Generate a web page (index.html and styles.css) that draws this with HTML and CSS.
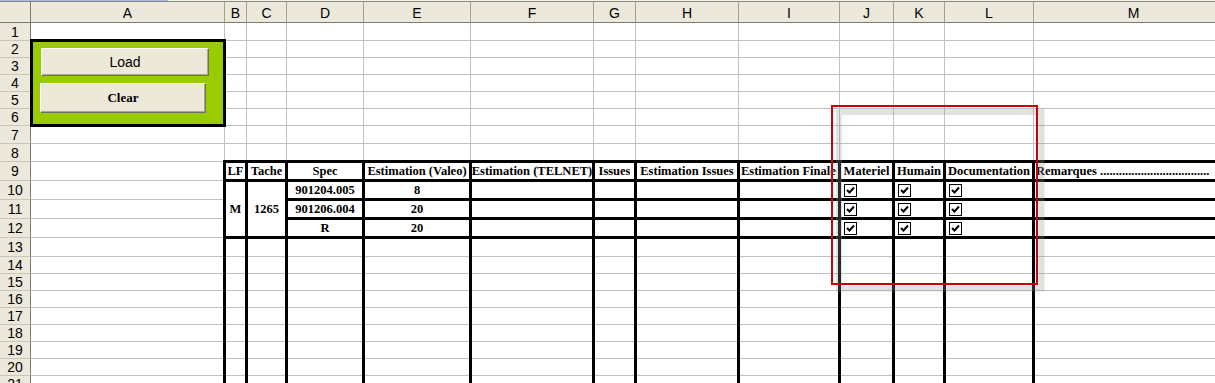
FILE: index.html
```html
<!DOCTYPE html>
<html lang="fr">
<head>
    <meta charset="UTF-8">
    <title>Estimation - Feuil1</title>
    <meta name="viewport" content="width=device-width">
    <link rel="stylesheet" href="styles.css">
    <script src="script.js" defer></script>
</head>
<body>
    <div class="topbar"><span class="topbar-sel"></span></div>
    <div class="sheet" id="sheet"></div>
    <!-- forme dessinée par-dessus la feuille -->
    <svg class="note" width="225" height="198" viewBox="0 0 225 198">
        <rect x="13" y="12" width="202.5" height="176.5" fill="none" stroke="rgba(150,150,150,.28)" stroke-width="6"/>
        <rect x="6" y="6" width="205" height="178" fill="none" stroke="#cc0000" stroke-width="2"/>
    </svg>
</body>
</html>
```

FILE: styles.css
```css
* {
    box-sizing: border-box;
}
body {
    margin: 0;
    overflow: hidden;
    background: #fff;
    color: #000;
    font-family: "Liberation Sans", Arial, sans-serif;
}
.topbar {
    height: 1px;
    background: #f1f0ea;
}
.topbar-sel {
    display: block;
    width: 168px;
    height: 1px;
    background: #a6b9e4;
}
.sheet {
    display: grid;
    grid-template-columns: 31px 194px 22px 40px 77px 107px 123px 42px 103px 101px 54px 51px 89px 200px;
    grid-template-rows: 21px 18px repeat(5, 17px) 18px 18px repeat(5, 19px) repeat(9, 17px);
    border-top: 1px solid #8f8d80;
}
.sheet > div {
    display: flex;
    align-items: center;
    justify-content: center;
    min-width: 0;
    white-space: nowrap;
    border-right: 1px solid #c0c0c0;
    border-bottom: 1px solid #c0c0c0;
}
.sheet span {
    overflow: hidden;
}
.corner, .ch, .rh {
    background: #ece9dc;
    font-size: 14px;
}
.corner {
    border-right-color: #7d7b6d !important;
    border-bottom-color: #7d7b6d !important;
}
.ch {
    padding-top: 1px;
    border-right-color: #a3a08f !important;
    border-bottom-color: #7d7b6d !important;
}
.rh {
    border-right-color: #7d7b6d !important;
    border-bottom-color: #c9c6b7 !important;
}
.cell {
    position: relative;
    font: 700 12.5px "Liberation Serif", "Times New Roman", serif;
}
.cell.left {
    justify-content: flex-start;
    padding-left: 2px;
}
.span3 {
    grid-row: span 3;
}
.span5 {
    grid-row: span 5;
}
.box::after, .side::after, .panel::after {
    content: '';
    position: absolute;
    z-index: 1;
    top: -2px;
    bottom: -2px;
    left: -2px;
    right: -2px;
    border: 3px solid #000;
    pointer-events: none;
}
.side::after {
    top: 0;
    bottom: -1px;
    border-top: 0;
    border-bottom: 0;
}
.panel {
    flex-direction: column;
    align-items: flex-start !important;
    justify-content: flex-start !important;
    padding: 7px 0 0 9px;
    background: #99cc00;
}
.panel::after {
    left: -1px;
}
.btn {
    padding: 0;
    background: #ece9d8;
    color: #000;
    border: 1px solid;
    border-color: #fff #716f64 #716f64 #fff;
    box-shadow: inset -1px -1px #aca899;
}
.btn-load {
    margin-left: 1px;
    width: 168px;
    height: 28px;
    font: 14px "Liberation Sans", Arial, sans-serif;
}
.btn-clear {
    margin-top: 7px;
    width: 166px;
    height: 30px;
    font: 700 13px "Liberation Serif", "Times New Roman", serif;
}
.check {
    justify-content: flex-start !important;
    padding-left: 4px;
}
.check svg {
    display: block;
}
.note {
    position: absolute;
    left: 826px;
    top: 100px;
    z-index: 2;
    pointer-events: none;
}
```

FILE: script.js
```js
const COLS = "ABCDEFGHIJKLM".split("");
const ROWS = 22;

const DATA = {
    B9: "LF", C9: "Tache", D9: "Spec", E9: "Estimation (Valeo)",
    F9: "Estimation (TELNET)", G9: "Issues", H9: "Estimation Issues",
    I9: "Estimation Finale", J9: "Materiel", K9: "Humain", L9: "Documentation",
    M9: "Remarques ...................................",
    B10: "M", C10: "1265",
    D10: "901204.005", E10: "8",
    D11: "901206.004", E11: "20",
    D12: "R", E12: "20"
};

// cellules fusionnées : nombre de lignes
const MERGED = { A2: 5, B10: 3, C10: 3 };
const HIDDEN = ["A3", "A4", "A5", "A6", "B11", "B12", "C11", "C12"];
const CHECKS = ["J10", "K10", "L10", "J11", "K11", "L11", "J12", "K12", "L12"];

const CHECKBOX = '<svg width="13" height="13" viewBox="0 0 13 13">' +
    '<rect x="0.5" y="0.5" width="12" height="12" fill="#fff" stroke="#000"/>' +
    '<path d="M3 6l2.5 2.5 4.5-5" fill="none" stroke="#000" stroke-width="2"/></svg>';

const PANEL = '<button class="btn btn-load" type="button">Load</button>' +
    '<button class="btn btn-clear" type="button">Clear</button>';

function makeCell(cls, text) {
    const div = document.createElement("div");
    div.className = cls;
    if (text) {
        const span = document.createElement("span");
        span.textContent = text;
        div.appendChild(span);
    }
    return div;
}

const sheet = document.getElementById("sheet");
sheet.appendChild(makeCell("corner"));
COLS.forEach(c => sheet.appendChild(makeCell("ch", c)));

for (let r = 1; r <= ROWS; r++) {
    sheet.appendChild(makeCell("rh", String(r)));
    COLS.forEach((c, i) => {
        const ref = c + r;
        if (HIDDEN.includes(ref)) return;
        let cls = "cell";
        if (MERGED[ref]) cls += " span" + MERGED[ref];
        if (i > 0 && r >= 9 && r <= 12) cls += " box";
        if (i > 0 && r >= 13) cls += " side";
        if (c === "M" || ref === "I9") cls += " left";
        const el = makeCell(cls, DATA[ref]);
        if (CHECKS.includes(ref)) {
            el.classList.add("check");
            el.innerHTML = CHECKBOX;
        }
        if (ref === "A2") {
            el.classList.add("panel");
            el.innerHTML = PANEL;
        }
        sheet.appendChild(el);
    });
}
```
